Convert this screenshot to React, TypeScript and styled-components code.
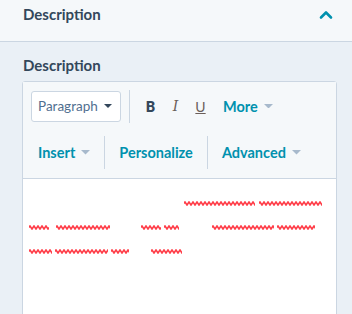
import React from 'react';
import styled, { createGlobalStyle } from 'styled-components';

const GlobalStyle = createGlobalStyle`
  body {
    margin: 0;
    background: #eaf0f6;
    font-family: Lato, "Open Sans", sans-serif;
    color: #33475b;
    overflow: hidden;
  }
`;

const Page = styled.div`
  width: 352px;
  height: 314px;
  overflow: hidden;
`;

const Header = styled.div`
  height: 42px;
  padding: 4px 19px 0 23px;
  box-sizing: border-box;
  display: flex;
  align-items: flex-start;
  justify-content: space-between;
  background: #f5f8fa;
  border-bottom: 1px solid #cbd6e2;
`;

const Title = styled.div`
  font-size: 15px;
  font-weight: 700;
  line-height: 20px;
`;

const Body = styled.div`
  padding: 13px 15px 0 22px;
`;

const Label = styled.div`
  font-size: 15px;
  font-weight: 700;
  line-height: 20px;
  padding-left: 1px;
  margin-bottom: 6px;
`;

const Editor = styled.div`
  border: 1px solid #cbd6e2;
  border-radius: 3px 3px 0 0;
  background: #fff;
`;

const Toolbar = styled.div`
  background: #f5f8fa;
  border-bottom: 1px solid #cbd6e2;
`;

const ToolRow = styled.div<{ $pad: number; $lift?: number }>`
  height: 48px;
  box-sizing: border-box;
  display: flex;
  align-items: center;
  padding-left: ${(p) => p.$pad}px;
  padding-bottom: ${(p) => p.$lift ?? 0}px;
`;

const Select = styled.div`
  width: 90px;
  height: 31px;
  box-sizing: border-box;
  border: 1px solid #cbd6e2;
  border-radius: 3px;
  background: #fff;
  display: flex;
  align-items: center;
  justify-content: space-between;
  padding: 0 8px 0 6px;
  font-size: 13.5px;
  color: #516f90;
`;

const Divider = styled.div<{ $ml: number; $mr: number }>`
  width: 1px;
  height: 33px;
  background: #cbd6e2;
  margin-left: ${(p) => p.$ml}px;
  margin-right: ${(p) => p.$mr}px;
`;

const FormatBtn = styled.span<{ $italic?: boolean; $under?: boolean; $dark?: boolean }>`
  width: 25px;
  text-align: center;
  font-size: 14px;
  font-weight: ${(p) => (p.$dark ? 800 : 400)};
  font-style: ${(p) => (p.$italic ? 'italic' : 'normal')};
  font-family: ${(p) => (p.$italic ? '"DejaVu Serif", serif' : 'Lato, sans-serif')};
  text-decoration: ${(p) => (p.$under ? 'underline' : 'none')};
  color: ${(p) => (p.$dark ? '#33475b' : '#6b5f5a')};
`;

const Menu = styled.span<{ $ml?: number }>`
  display: flex;
  align-items: center;
  gap: 6px;
  margin-left: ${(p) => p.$ml ?? 0}px;
  font-size: 14.5px;
  font-weight: 700;
  color: #0091ae;
`;

const Content = styled.div`
  min-height: 200px;
  padding: 5px 6px 0 6px;
`;

const Line = styled.div`
  height: 24px;
  display: flex;
  align-items: flex-end;
`;

const SquiggleBox = styled.svg<{ $ml: number }>`
  display: block;
  margin-left: ${(p) => p.$ml}px;
  margin-bottom: 2px;
`;

const Caret = ({ color = '#a7b9cc', w = 9 }: { color?: string; w?: number }) => (
  <svg width={w} height={w / 2} viewBox={`0 0 ${w} ${w / 2}`}>
    <path d={`M0 0 L${w} 0 L${w / 2} ${w / 2} Z`} fill={color} />
  </svg>
);

const Squiggle = ({ w, ml }: { w: number; ml: number }) => {
  let d = 'M0 2.5';
  for (let x = 0; x < w; x += 4) {
    d += ` L${x + 1} 1 L${x + 3} 4 L${x + 4} 2.5`;
  }
  return (
    <SquiggleBox $ml={ml} width={w} height={5} viewBox={`0 0 ${w} 5`}>
      <path d={d} stroke="#ff3d48" strokeWidth="1.6" fill="none" />
    </SquiggleBox>
  );
};

// spelling marks, x ranges in page pixels
const lines: [number, number][][] = [
  [[184, 255], [259, 322]],
  [[29, 49], [56, 110], [141, 161], [164, 179], [212, 274], [277, 315]],
  [[29, 52], [55, 108], [111, 129], [151, 182]],
];

const App: React.FC = () => {
  return (
    <Page>
      <GlobalStyle />
      <Header>
        <Title>Description</Title>
        <svg width="14" height="10" viewBox="0 0 14 10" style={{ marginTop: 6 }}>
          <path d="M2 7.5 L7 2.5 L12 7.5" stroke="#0091ae" strokeWidth="2.6" fill="none" strokeLinecap="round" strokeLinejoin="round" />
        </svg>
      </Header>
      <Body>
        <Label>Description</Label>
        <Editor>
          <Toolbar>
            <ToolRow $pad={8}>
              <Select>
                <span>Paragraph</span>
                <Caret color="#33475b" w={8} />
              </Select>
              <Divider $ml={8} $mr={8} />
              <FormatBtn $dark>B</FormatBtn>
              <FormatBtn $italic>I</FormatBtn>
              <FormatBtn $under>U</FormatBtn>
              <Menu $ml={10}>
                More <Caret />
              </Menu>
            </ToolRow>
            <ToolRow $pad={15} $lift={3}>
              <Menu>
                Insert <Caret />
              </Menu>
              <Divider $ml={14} $mr={14} />
              <Menu>Personalize</Menu>
              <Divider $ml={14} $mr={14} />
              <Menu>
                Advanced <Caret />
              </Menu>
            </ToolRow>
          </Toolbar>
          <Content>
            {lines.map((segs, i) => {
              let prev = 29;
              return (
                <Line key={i}>
                  {segs.map(([a, b], j) => {
                    const ml = a - prev;
                    prev = b;
                    return <Squiggle key={j} w={b - a} ml={ml} />;
                  })}
                </Line>
              );
            })}
          </Content>
        </Editor>
      </Body>
    </Page>
  );
};

export default App;
